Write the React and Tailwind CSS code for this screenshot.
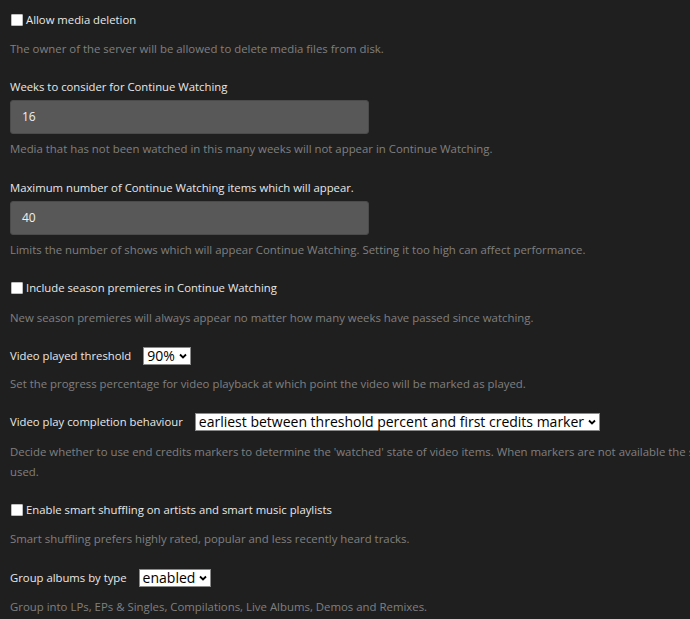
import React from "react";

const font = { fontFamily: '"Open Sans", "Noto Sans", sans-serif' };

function Help({ children, className = "" }) {
  return (
    <p className={"text-[11.4px] leading-[20px] text-[#808080] " + className}>{children}</p>
  );
}

function Label({ children, className = "" }) {
  return <div className={"text-[11.3px] leading-[20px] text-[#e8e8e8] " + className}>{children}</div>;
}

function Check({ label }) {
  return (
    <label className="flex items-center h-[20px] text-[11.3px] text-[#e8e8e8]">
      <span className="w-[12px] h-[12px] ml-[1px] mr-[3px] bg-white border border-[#bdbdbd] rounded-[1px] shrink-0" />
      {label}
    </label>
  );
}

function Input({ value }) {
  return (
    <div className="w-[359px] h-[34px] mt-[3px] bg-[#585858] border border-[#4b4b4b] rounded-[3px] flex items-center pl-[11px] text-[12px] text-[#f0f0f0]">
      {value}
    </div>
  );
}

function Sel({ value }) {
  return (
    <span
      className="inline-flex items-center h-[18px] bg-white border border-[#8a8a8a] pl-[3px] pr-[3px] text-[14px] leading-none text-black whitespace-nowrap"
      style={{ fontFamily: '"Open Sans", sans-serif' }}
    >
      <span className="-mt-[1px]">{value}</span>
      <svg className="ml-[4px]" width="8" height="6" viewBox="0 0 8 6" fill="none">
        <polyline points="1,1.5 4,4.5 7,1.5" stroke="#000" strokeWidth="1.8" />
      </svg>
    </span>
  );
}

export default function App() {
  return (
    <div className="w-[690px] h-[619px] overflow-hidden bg-[#1f1f1f]" style={font}>
      <div className="w-[828px] pl-[10px] pt-[10px]">
        <Check label="Allow media deletion" />
        <Help className="mt-[9px]">The owner of the server will be allowed to delete media files from disk.</Help>

        <Label className="mt-[18px]">Weeks to consider for Continue Watching</Label>
        <Input value="16" />
        <Help className="mt-[5px]">Media that has not been watched in this many weeks will not appear in Continue Watching.</Help>

        <Label className="mt-[19px]">Maximum number of Continue Watching items which will appear.</Label>
        <Input value="40" />
        <Help className="mt-[5px]">Limits the number of shows which will appear Continue Watching. Setting it too high can affect performance.</Help>

        <div className="mt-[18px]"><Check label="Include season premieres in Continue Watching" /></div>
        <Help className="mt-[10px]">New season premieres will always appear no matter how many weeks have passed since watching.</Help>

        <div className="mt-[18px] flex items-center h-[20px] text-[11.3px] text-[#e8e8e8]">
          <span className="mr-[12px]">Video played threshold</span>
          <Sel value="90%" />
        </div>
        <Help className="mt-[8px]">Set the progress percentage for video playback at which point the video will be marked as played.</Help>

        <div className="mt-[18px] flex items-center h-[20px] text-[11.3px] text-[#e8e8e8]">
          <span className="mr-[12px]">Video play completion behaviour</span>
          <Sel value="earliest between threshold percent and first credits marker" />
        </div>
        <Help className="mt-[10px]">Decide whether to use end credits markers to determine the 'watched' state of video items. When markers are not available the selected threshold will be used.</Help>

        <div className="mt-[18px]"><Check label="Enable smart shuffling on artists and smart music playlists" /></div>
        <Help className="mt-[9px]">Smart shuffling prefers highly rated, popular and less recently heard tracks.</Help>

        <div className="mt-[19px] flex items-center h-[20px] text-[11.3px] text-[#e8e8e8]">
          <span className="mr-[12px]">Group albums by type</span>
          <Sel value="enabled" />
        </div>
        <Help className="mt-[9px]">Group into LPs, EPs &amp; Singles, Compilations, Live Albums, Demos and Remixes.</Help>
      </div>
    </div>
  );
}
